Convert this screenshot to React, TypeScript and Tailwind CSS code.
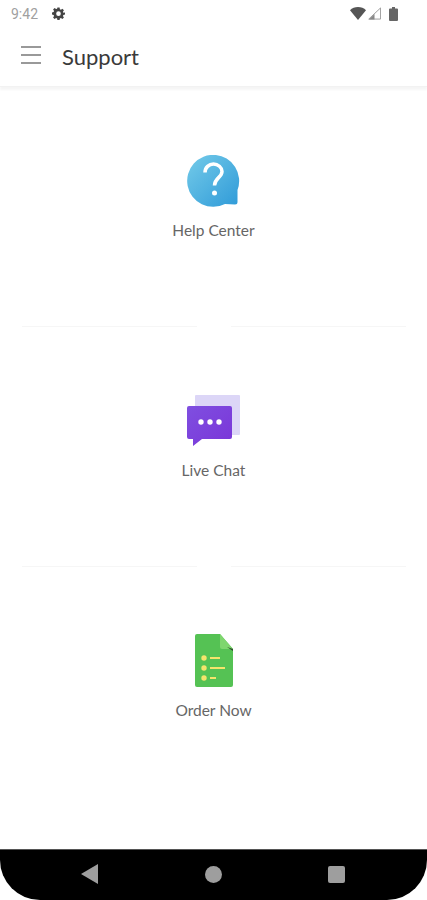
import React from 'react';

const StatusBar = () => (
  <div className="h-[28px] flex items-center justify-between pl-[11px] pr-[29px] bg-white">
    <div className="flex items-center gap-[14px]">
      <span className="text-[14px] leading-none text-[#a0a0a0] font-['Roboto',sans-serif]">9:42</span>
      <svg width="13" height="13" viewBox="0 0 24 24" fill="#444">
        <path fillRule="evenodd" d="M10 1h4l.6 3.2 1.9.8 2.7-1.8 2.8 2.8-1.8 2.7.8 1.9L24 10v4l-3 .6-.8 1.9 1.8 2.7-2.8 2.8-2.7-1.8-1.9.8L14 24h-4l-.6-3-1.9-.8-2.7 1.8L2 19.2l1.8-2.7-.8-1.9L0 14v-4l3-.6.8-1.9L2 4.8 4.8 2l2.7 1.8 1.9-.8L10 1zm2 7a4.3 4.3 0 100 8.6A4.3 4.3 0 0012 8z" />
      </svg>
    </div>
    <div className="flex items-center">
      <svg width="16" height="13" viewBox="0 0 16 13" fill="#555"><path d="M0 3.2C2 1.2 5 0 8 0s6 1.2 8 3.2L8 13 0 3.2z" /></svg>
      <svg className="ml-[2px]" width="13" height="13" viewBox="0 0 14 13"><path d="M13.500 .5v12H.8L13.500 .5z" fill="#fff" stroke="#999" /><path d="M7 13V7L1 13h6z" fill="#888" /></svg>
      <svg className="ml-[8px]" width="9" height="14" viewBox="0 0 9 14" fill="#666"><path d="M3 0h3v1.500h2a1 1 0 011 1V13a1 1 0 01-1 1H1a1 1 0 01-1-1V2.500a1 1 0 011-1h2V0z" /></svg>
    </div>
  </div>
);

const Toolbar = () => (
  <div className="h-[60px] flex items-center pl-[21px] shadow-[0_3px_2px_rgba(0,0,0,0.04)] border-b border-[#f2f2f2]">
    <div className="w-[20px] flex flex-col gap-[6px] -mt-[4px]">
      <div className="h-[2px] bg-[#999999]" />
      <div className="h-[2px] bg-[#999999]" />
      <div className="h-[2px] bg-[#999999]" />
    </div>
    <span className="ml-[21px] text-[22px] leading-none text-[#3a3a3a] font-['Lato',sans-serif]">Support</span>
  </div>
);

const HelpIcon = () => (
  <svg width="54" height="52" viewBox="0 0 54 52">
    <defs>
      <linearGradient id="help" x1="0" y1="0" x2="1" y2="1">
        <stop offset="0" stopColor="#74cbe9" />
        <stop offset="1" stopColor="#2f9ad8" />
      </linearGradient>
    </defs>
    <path d="M50.500 35V47Q50.500 49.500 48 49.500L38 49A26 26 0 1150.500 35z" fill="url(#help)" />
    <path d="M18 17.500c0-5 4-8.500 8.500-8.500s8.500 3.500 8.500 7.500c0 6-7.500 6.500-7.500 14" fill="none" stroke="#fff" strokeWidth="3.500" />
    <circle cx="27.500" cy="38" r="2.500" fill="#fff" />
  </svg>
);

const ChatIcon = () => (
  <svg width="54" height="52" viewBox="0 0 54 52">
    <defs>
      <linearGradient id="chat" x1="0" y1="0" x2="1" y2="1">
        <stop offset="0" stopColor="#7f4fe0" />
        <stop offset="1" stopColor="#7a35d8" />
      </linearGradient>
    </defs>
    <rect x="8" y="0" width="45" height="40" rx="1" fill="#dcd6f7" />
    <path d="M2 11h41a2 2 0 012 2v29a2 2 0 01-2 2H15L6 51v-7H2a2 2 0 01-2-2V13a2 2 0 012-2z" fill="url(#chat)" />
    <circle cx="14" cy="27" r="2.700" fill="#fff" />
    <circle cx="23" cy="27" r="2.700" fill="#fff" />
    <circle cx="32" cy="27" r="2.700" fill="#fff" />
  </svg>
);

const OrderIcon = () => (
  <svg width="38" height="53" viewBox="0 0 38 53">
    <path d="M2 0h23l13 15v36a2 2 0 01-2 2H2a2 2 0 01-2-2V2a2 2 0 012-2z" fill="#55c254" />
    <path d="M25 0l13 15H27a2 2 0 01-2-2V0z" fill="#7ed66e" />
    <path d="M32 13l6 2v2z" fill="#2c4a2c" />
    <circle cx="9" cy="24" r="2.700" fill="#f4e46c" />
    <circle cx="9" cy="34" r="2.700" fill="#f4e46c" />
    <circle cx="9" cy="44" r="2.700" fill="#f4e46c" />
    <path d="M15 24h10M15 34h15M15 44h6" stroke="#f4e46c" strokeWidth="1.800" />
  </svg>
);

const items = [
  { label: 'Help Center', icon: <HelpIcon />, height: 'h-[238px]', top: 'pt-[65px]' },
  { label: 'Live Chat', icon: <ChatIcon />, height: 'h-[240px]', top: 'pt-[67px]' },
  { label: 'Order Now', icon: <OrderIcon />, height: 'h-[282px]', top: 'pt-[67px]' },
];

export default function App() {
  return (
    <div className="w-[427px] h-[900px] bg-white flex flex-col overflow-hidden font-['Lato',sans-serif]">
      <StatusBar />
      <Toolbar />
      <div className="h-[2px]" />
      <main className="flex-1 flex flex-col">
        {items.map((item, i) => (
          <div key={item.label} className={`${item.height} ${item.top} flex flex-col items-center relative`}>
            <div className="h-[53px] flex items-center justify-center">{item.icon}</div>
            <span className="mt-[13px] text-[15.5px] leading-[20px] text-[#666666]">{item.label}</span>
            {i < 2 && (
              <div className="absolute bottom-0 left-[22px] right-[21px] flex justify-between">
                <div className="w-[175px] h-[1px] bg-[#f6f6f6]" />
                <div className="w-[175px] h-[1px] bg-[#f6f6f6]" />
              </div>
            )}
          </div>
        ))}
      </main>
      <nav className="h-[51px] shrink-0 bg-black border-t border-[#555] rounded-b-[40px] flex items-center">
        <div className="w-full flex items-center justify-between pl-[81px] pr-[82px] -mt-[2px]">
          <svg width="18" height="20" viewBox="0 0 18 20" fill="#9e9e9e"><path d="M17 0v20L0 10 17 0z" /></svg>
          <div className="w-[17px] h-[17px] rounded-full bg-[#9e9e9e]" />
          <div className="w-[17px] h-[17px] rounded-[2px] bg-[#9e9e9e]" />
        </div>
      </nav>
    </div>
  );
}
